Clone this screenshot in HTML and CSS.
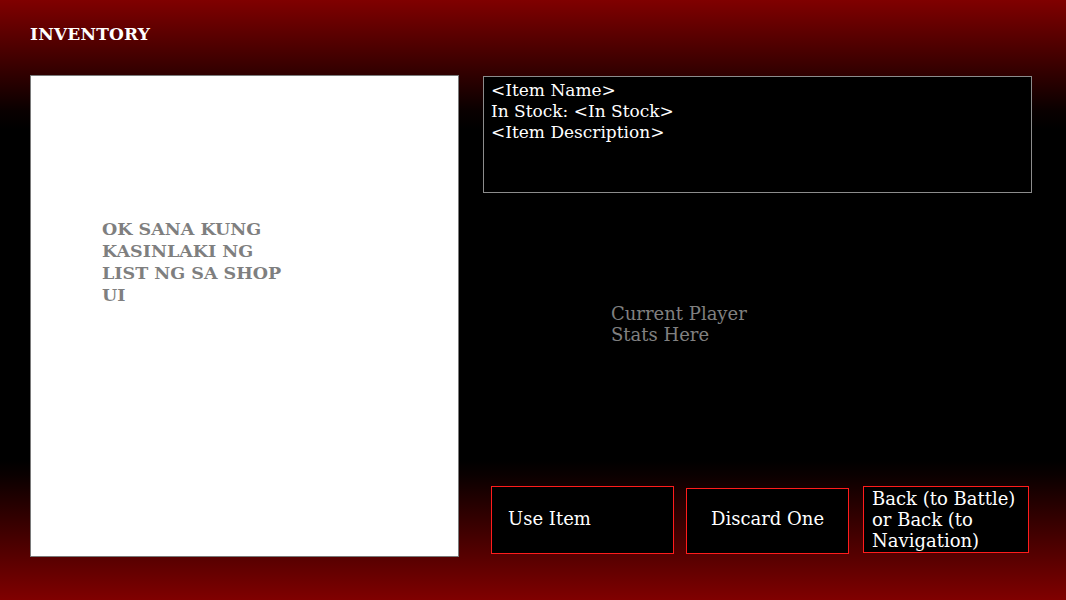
FILE: index.html
```html
<!DOCTYPE html>
<html>
<head>
<meta charset="utf-8">
<link rel="stylesheet" href="styles.css">
</head>
<body>
<div class="screen">
  <h1 class="title">INVENTORY</h1>
  <div class="main">
    <div class="list-panel">
      <p class="list-note">OK SANA KUNG<br>KASINLAKI NG<br>LIST NG SA SHOP<br>UI</p>
    </div>
    <div class="right">
      <div class="info-box">
        <div>&lt;Item Name&gt;</div>
        <div>In Stock: &lt;In Stock&gt;</div>
        <div>&lt;Item Description&gt;</div>
      </div>
      <div class="stats">Current Player<br>Stats Here</div>
      <div class="buttons">
        <div class="btn btn-use">Use Item</div>
        <div class="btn btn-discard">Discard One</div>
        <div class="btn btn-back">Back (to Battle) or Back (to Navigation)</div>
      </div>
    </div>
  </div>
</div>
</body>
</html>
```

FILE: styles.css
```css
html, body {
  margin: 0;
  padding: 0;
}
body {
  width: 1066px;
  height: 600px;
  overflow: hidden;
  font-family: "DejaVu Serif", serif;
}
.screen {
  width: 1066px;
  height: 600px;
  box-sizing: border-box;
  padding: 25px 0 0 30px;
  background: linear-gradient(to bottom, #800000 0px, #0a0000 110px, #000000 130px, #000000 460px, #0a0000 475px, #800000 600px);
  color: #ffffff;
}
.title {
  margin: 0;
  font-size: 17px;
  line-height: 18px;
  font-weight: bold;
  letter-spacing: 0.2px;
}
.main {
  display: flex;
  margin-top: 32px;
}
.list-panel {
  width: 427px;
  height: 480px;
  background: #ffffff;
  border: 1px solid #7a7a7a;
  flex: none;
}
.list-note {
  margin: 142px 0 0 71px;
  color: #7f7f7f;
  font-weight: bold;
  font-size: 17.5px;
  line-height: 22px;
}
.right {
  display: flex;
  flex-direction: column;
  margin-left: 24px;
  width: 549px;
}
.info-box {
  margin-top: 1px;
  border: 1px solid #8c8c8c;
  background: #000;
  padding: 3px 7px;
  box-sizing: border-box;
  height: 117px;
  font-size: 17px;
  line-height: 21px;
  color: #fff;
}
.stats {
  margin: 110px 0 0 128px;
  color: #808080;
  font-size: 18px;
  line-height: 21px;
}
.buttons {
  display: flex;
  align-items: flex-start;
  margin-top: 141px;
  padding-left: 8px;
}
.btn {
  box-sizing: border-box;
  border: 1px solid #ff1c1c;
  background: #000;
  color: #fff;
  font-size: 18px;
  line-height: 21px;
  flex: none;
}
.btn-use {
  width: 183px;
  height: 68px;
  display: flex;
  align-items: center;
  padding: 0 0 4px 16px;
}
.btn-discard {
  width: 163px;
  height: 66px;
  margin: 2px 0 0 12px;
  display: flex;
  align-items: center;
  justify-content: center;
  padding-bottom: 6px;
}
.btn-back {
  width: 166px;
  height: 67px;
  margin-left: 14px;
  padding: 1px 4px 0 8px;
}
```
